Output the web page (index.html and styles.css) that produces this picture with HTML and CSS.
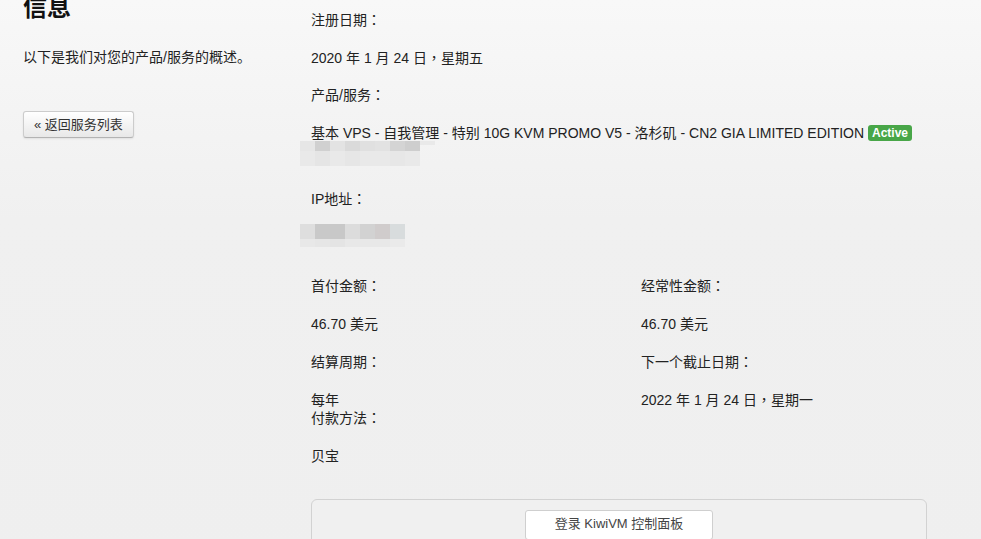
FILE: index.html
```html
<!DOCTYPE html>
<html lang="zh-CN">
<head>
<meta charset="utf-8">
<title>信息</title>
<link rel="stylesheet" href="styles.css">
</head>
<body>
<div class="page">
  <aside class="side">
    <h1 class="title">信息</h1>
    <p class="intro">以下是我们对您的产品/服务的概述。</p>
    <a class="btn-back" href="#">« 返回服务列表</a>
  </aside>
  <main class="main">
    <p class="lbl">注册日期<span class="pn" lang="zh-Hant">：</span></p>
    <p class="val">2020 年 1 月 24 日<span class="pn" lang="zh-Hant">，</span>星期五</p>
    <p class="lbl">产品/服务<span class="pn" lang="zh-Hant">：</span></p>
    <p class="val product">基本 VPS - 自我管理 - 特别 10G KVM PROMO V5 - 洛杉矶 - CN2 GIA LIMITED EDITION <span class="badge">Active</span></p>
    <div class="blur blur-a">
      <div class="brow top"><i></i><i></i><i></i><i></i><i></i><i></i><i></i><i></i><i></i></div>
      <div class="brow bot"><i></i><i></i><i></i><i></i><i></i><i></i><i></i><i></i></div>
    </div>
    <p class="lbl ip">IP地址<span class="pn" lang="zh-Hant">：</span></p>
    <div class="blur blur-b">
      <div class="brow top"><i></i><i></i><i></i><i></i><i></i><i></i><i></i></div>
      <div class="brow bot"><i></i><i></i><i></i><i></i><i></i><i></i><i></i></div>
    </div>
    <div class="cols">
      <div class="col">
        <p class="lbl">首付金额<span class="pn" lang="zh-Hant">：</span></p>
        <p class="val">46.70 美元</p>
        <p class="lbl">结算周期<span class="pn" lang="zh-Hant">：</span></p>
        <p class="val tight">每年</p>
        <p class="lbl">付款方法<span class="pn" lang="zh-Hant">：</span></p>
        <p class="val">贝宝</p>
      </div>
      <div class="col">
        <p class="lbl">经常性金额<span class="pn" lang="zh-Hant">：</span></p>
        <p class="val">46.70 美元</p>
        <p class="lbl">下一个截止日期<span class="pn" lang="zh-Hant">：</span></p>
        <p class="val">2022 年 1 月 24 日<span class="pn" lang="zh-Hant">，</span>星期一</p>
      </div>
    </div>
    <div class="panel">
      <a class="btn-panel" href="#">登录 KiwiVM 控制面板</a>
    </div>
  </main>
</div>
</body>
</html>
```
FILE: styles.css
```css
html, body {
  margin: 0;
  padding: 0;
}
body {
  background: linear-gradient(to bottom, #f8f8f8 0, #f0f0f0 220px, #efefef 100%);
  min-height: 539px;
  font-family: "Liberation Sans", "Noto Sans CJK SC", sans-serif;
  font-size: 14px;
  line-height: 18px;
  color: #222;
  overflow: hidden;
}
.pn {
  font-family: "Noto Sans CJK TC", "Noto Sans CJK SC", sans-serif;
  line-height: 0;
}
.page {
  display: flex;
  gap: 20px;
  padding-left: 23px;
}
.side {
  width: 268px;
  flex: none;
  margin-top: -4px;
}
.title {
  margin: 0 0 28px;
  font-size: 24px;
  line-height: 24px;
  font-weight: bold;
  color: #111;
}
.intro {
  margin: 0 0 45px;
}
.btn-back {
  display: inline-block;
  box-sizing: border-box;
  height: 27px;
  padding: 0 10px;
  font-size: 13px;
  line-height: 25px;
  color: #333;
  text-decoration: none;
  background: linear-gradient(to bottom, #ffffff, #e8e8e8);
  border: 1px solid #cccccc;
  border-bottom-color: #b3b3b3;
  border-radius: 3px;
  box-shadow: inset 0 1px 0 rgba(255,255,255,.2), 0 1px 2px rgba(0,0,0,.08);
}
.main {
  width: 616px;
  flex: none;
  padding-top: 11px;
}
.lbl, .val {
  margin: 0 0 19.5px;
}
.val.tight {
  margin-bottom: 0;
}
.product {
  white-space: nowrap;
  margin-bottom: 0;
}
.badge {
  display: inline-block;
  padding: 0 4px;
  height: 16px;
  line-height: 16px;
  font-size: 12px;
  font-weight: bold;
  color: #fff;
  background: #48a648;
  border-radius: 3px;
  vertical-align: 1px;
}
.blur {
  margin-left: -11px;
}
.brow {
  display: flex;
}
.brow i {
  display: block;
  width: 15px;
}
.blur-a {
  margin-top: -1px;
  margin-bottom: 24px;
}
.blur-a .top i { height: 10px; }
.blur-a .bot i { height: 15px; }
.blur-a .top i:nth-child(1) { background: #e6e6e6; }
.blur-a .top i:nth-child(2) { background: #d0d0d0; }
.blur-a .top i:nth-child(3) { background: #e3e3e3; }
.blur-a .top i:nth-child(4) { background: #dadada; }
.blur-a .top i:nth-child(5) { background: #e0e0e0; }
.blur-a .top i:nth-child(6) { background: #e2e2e2; }
.blur-a .top i:nth-child(7) { background: #d4d4d4; }
.blur-a .top i:nth-child(8) { background: #cecece; }
.blur-a .top i:nth-child(9) { background: #e9e9e9; height: 4px; }
.blur-a .bot i { background: #e9e9e9; }
.blur-a .bot i:nth-child(2) { background: #e5e5e5; }
.blur-a .bot i:nth-child(4) { background: #e6e6e6; }
.blur-a .bot i:nth-child(7) { background: #e7e7e7; }
.lbl.ip {
  margin-bottom: 16px;
}
.blur-b {
  margin-bottom: 30px;
}
.blur-b .top i { height: 15px; }
.blur-b .bot i { height: 8px; }
.blur-b .top i:nth-child(1) { background: #dedede; }
.blur-b .top i:nth-child(2) { background: #c9c9c9; }
.blur-b .top i:nth-child(3) { background: #c8c8c8; }
.blur-b .top i:nth-child(4) { background: #dcdcdc; }
.blur-b .top i:nth-child(5) { background: #d2d2d2; }
.blur-b .top i:nth-child(6) { background: #d0cccc; }
.blur-b .top i:nth-child(7) { background: #d8dcdd; }
.blur-b .bot i { background: #e8e8e8; }
.blur-b .bot i:nth-child(2) { background: #e6e6e6; }
.blur-b .bot i:nth-child(3) { background: #e4e4e4; }
.blur-b .bot i:nth-child(7) { background: #eaeaea; }
.cols {
  display: flex;
}
.col {
  flex: none;
  width: 330px;
}
.col + .col {
  width: 286px;
}
.cols .lbl, .cols .val {
  margin-bottom: 20px;
}
.cols .val.tight {
  margin-bottom: 0;
}
.panel {
  margin-top: 14px;
  box-sizing: border-box;
  border: 1px solid #d2d2d2;
  border-radius: 6px;
  padding: 10px 0 20px;
  display: flex;
  justify-content: center;
  background: #f0f0f0;
}
.btn-panel {
  display: inline-block;
  box-sizing: border-box;
  width: 188px;
  height: 30px;
  text-align: center;
  font-size: 13px;
  line-height: 26px;
  color: #444;
  text-decoration: none;
  background: #fff;
  border: 1px solid #cfcfcf;
  border-radius: 3px;
}
```
